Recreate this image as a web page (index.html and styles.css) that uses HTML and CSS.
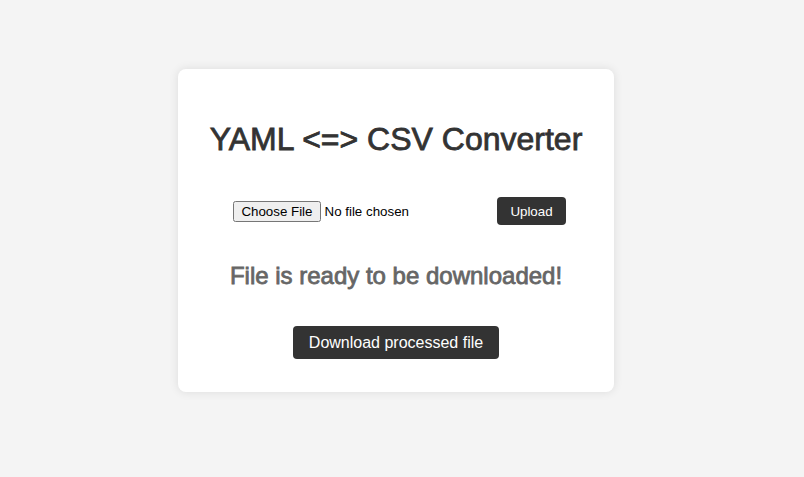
FILE: index.html
```html
<!DOCTYPE html>
<html>
<head>
<meta charset="utf-8">
<link rel="stylesheet" href="styles.css">
</head>
<body>
<div class="page">
  <div class="card">
    <h1 class="title">YAML &lt;=&gt; CSV Converter</h1>
    <form class="upload-form">
      <input type="file" class="file-input">
      <button type="button" class="btn btn-upload">Upload</button>
    </form>
    <h2 class="status">File is ready to be downloaded!</h2>
    <button type="button" class="btn btn-download">Download processed file</button>
  </div>
</div>
</body>
</html>
```

FILE: styles.css
```css
html, body {
  margin: 0;
  padding: 0;
  background: #f4f4f4;
  font-family: "Liberation Sans", Arial, sans-serif;
}
.page {
  height: 477px;
  box-sizing: border-box;
  padding: 0 12px 16px 0;
  display: flex;
  align-items: center;
  justify-content: center;
}
.card {
  width: 436px;
  height: 323px;
  box-sizing: border-box;
  background: #fff;
  border-radius: 8px;
  box-shadow: 0 0 10px rgba(0,0,0,0.1);
  display: flex;
  flex-direction: column;
  align-items: center;
  padding-top: 52px;
}
.title {
  margin: 0;
  font-size: 32px;
  font-weight: normal;
  color: #333;
  -webkit-text-stroke: 0.8px #333;
}
.upload-form {
  margin-top: 39px;
  margin-left: 7px;
  display: flex;
  align-items: center;
  gap: 11px;
}
.file-input {
  font-family: "Liberation Sans", Arial, sans-serif;
  font-size: 13.33px;
}
.btn {
  background: #333;
  color: #fff;
  border: none;
  border-radius: 4px;
  font-family: "Liberation Sans", Arial, sans-serif;
  cursor: pointer;
}
.btn-upload {
  font-size: 13.33px;
  height: 28px;
  padding: 0 13px;
}
.status {
  margin: 37px 0 0;
  font-size: 24px;
  font-weight: normal;
  color: #666;
  -webkit-text-stroke: 0.8px #666;
}
.btn-download {
  margin-top: 36px;
  font-size: 16px;
  height: 33px;
  padding: 0 16px;
}
```
